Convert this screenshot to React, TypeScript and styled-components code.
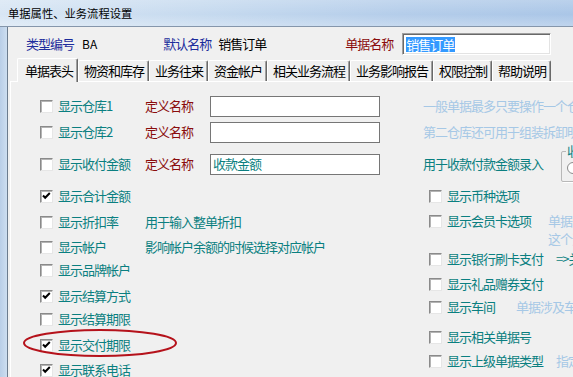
import React from 'react';
import styled, { createGlobalStyle } from 'styled-components';

const Global = createGlobalStyle`
  html, body { margin: 0; padding: 0; width: 573px; height: 377px; overflow: hidden; background: #f0f0f0; }
  body { font-family: "Noto Sans CJK SC", "Noto Sans", sans-serif; font-size: 13px; letter-spacing: -1px; }
  #root { width: 573px; height: 377px; }
`;

const C = {
  teal: '#0a7f80',
  maroon: '#8a0c0c',
  navy: '#1c2c9c',
  sky: '#a6c8e6',
  black: '#000',
};

const Window = styled.div`
  position: relative;
  width: 573px;
  height: 377px;
  overflow: hidden;
  display: flex;
  flex-direction: column;
  background: #f0f0f0;
`;

const TitleBar = styled.div`
  height: 26px;
  flex: none;
  display: flex;
  align-items: center;
  padding-left: 8px;
  background:
    linear-gradient(180deg, rgba(255, 255, 255, 0.2), rgba(255, 255, 255, 0) 55%, rgba(255, 255, 255, 0.25)),
    linear-gradient(90deg, #d8e6f4 0%, #c6daef 35%, #b4cdea 70%, #aac6e7 100%);
  border-bottom: 1px solid #8596ab;
  font-size: 11.3px;
  letter-spacing: 0;
  color: #000;
  white-space: nowrap;
`;

const Body = styled.div`
  flex: 1;
  display: flex;
  min-height: 0;
`;

const FrameEdge = styled.div`
  width: 7px;
  flex: none;
  background: linear-gradient(90deg, #b9cee7, #cddef0);
  border-right: 1px solid #6c7c8e;
`;

const Client = styled.div`
  flex: 1;
  min-width: 0;
  display: flex;
  flex-direction: column;
  padding-top: 6px;
`;

const HeaderRow = styled.div`
  height: 22px;
  flex: none;
  display: flex;
  align-items: center;
  padding-left: 18px;
  white-space: nowrap;
`;

const Text = styled.span<{ $color?: string; $ml?: number }>`
  flex: none;
  color: ${(p) => p.$color || '#000'};
  margin-left: ${(p) => p.$ml || 0}px;
  line-height: 16px;
  white-space: nowrap;
`;

const Latin = styled.span<{ $ml?: number }>`
  flex: none;
  margin-left: ${(p) => p.$ml || 0}px;
  font-size: 12px;
  letter-spacing: 0;
  line-height: 16px;
`;

const SunkenInput = styled.div<{ $ml?: number }>`
  flex: none;
  box-sizing: border-box;
  width: 149px;
  height: 22px;
  margin-left: ${(p) => p.$ml || 0}px;
  background: #fff;
  border: 1px solid;
  border-color: #a0a0a0 #fff #fff #a0a0a0;
  box-shadow: inset 1px 1px 0 #696969, inset -1px -1px 0 #e3e3e3;
  display: flex;
  align-items: center;
  padding-left: 3px;
`;

const Selected = styled.span`
  background: #3399ff;
  color: #fff;
  line-height: 15px;
  padding-right: 1px;
`;

const TabRow = styled.div`
  height: 23px;
  flex: none;
  margin-top: 3px;
  padding-left: 11px;
  display: flex;
  align-items: flex-end;
`;

const Tab = styled.div<{ $active?: boolean }>`
  box-sizing: border-box;
  height: ${(p) => (p.$active ? 24 : 21)}px;
  padding: 0 4px 0 ${(p) => (p.$active ? 7 : 5)}px;
  margin-left: ${(p) => (p.$active ? -2 : 0)}px;
  margin-bottom: ${(p) => (p.$active ? -1 : 0)}px;
  display: flex;
  align-items: center;
  border-top: 1px solid #fff;
  border-left: 1px solid #fff;
  border-right: 1px solid #696969;
  box-shadow: inset -1px 0 0 #a0a0a0;
  border-radius: 2px 2px 0 0;
  background: #f0f0f0;
  position: relative;
  z-index: ${(p) => (p.$active ? 2 : 1)};
  white-space: nowrap;
  line-height: 16px;
  color: #000;
`;

const Panel = styled.div`
  flex: 1;
  min-height: 0;
  margin-left: 2px;
  border-top: 1px solid #fff;
  border-left: 1px solid #fff;
  padding: 13px 0 0 29px;
  display: flex;
  flex-direction: column;
`;

const Row = styled.div<{ $mb?: number }>`
  height: 22px;
  flex: none;
  display: flex;
  align-items: center;
  margin-bottom: ${(p) => p.$mb || 0}px;
  white-space: nowrap;
`;

const Box = styled.span`
  box-sizing: border-box;
  width: 13px;
  height: 13px;
  flex: none;
  background: #fff;
  border: 1px solid;
  border-color: #8a8a8a #e6e6e6 #e6e6e6 #8a8a8a;
  box-shadow: inset 1px 1px 0 #b4b4b4;
  display: flex;
  align-items: center;
  justify-content: center;
`;

const Label = styled.span<{ $w?: number }>`
  flex: none;
  margin-left: 5px;
  width: ${(p) => (p.$w ? `${p.$w}px` : 'auto')};
  color: ${C.teal};
  line-height: 16px;
  white-space: nowrap;
`;

const DefLabel = styled.span`
  flex: none;
  width: 65px;
  color: ${C.maroon};
  line-height: 16px;
`;

const Field = styled.div`
  flex: none;
  box-sizing: border-box;
  width: 170px;
  height: 21px;
  background: #fff;
  border: 1px solid #767676;
  display: flex;
  align-items: center;
  padding-left: 2px;
  color: ${C.teal};
  line-height: 16px;
`;

const Hint = styled.span<{ $ml?: number; $color?: string }>`
  flex: none;
  margin-left: ${(p) => p.$ml || 0}px;
  color: ${(p) => p.$color || C.sky};
  line-height: 16px;
  white-space: nowrap;
`;

const MultiHint = styled.div<{ $ml?: number }>`
  flex: none;
  align-self: flex-start;
  margin-top: 2px;
  margin-left: ${(p) => p.$ml || 0}px;
  color: ${C.sky};
  line-height: 18px;
  white-space: nowrap;
`;

const GroupBox = styled.div`
  position: relative;
  flex: none;
  box-sizing: border-box;
  width: 60px;
  height: 31px;
  margin-left: 18px;
  margin-top: 4px;
  border: 1px solid #b8b8b8;
  border-radius: 2px;
  box-shadow: 1px 1px 0 #fff;
`;

const GroupLegend = styled.span`
  position: absolute;
  left: 4px;
  top: -9px;
  padding: 0 1px;
  background: #f0f0f0;
  color: ${C.teal};
  line-height: 16px;
`;

const Radio = styled.span`
  position: absolute;
  left: 5px;
  top: 10px;
  width: 12px;
  height: 12px;
  box-sizing: border-box;
  border-radius: 50%;
  border: 1px solid #8a8a8a;
  background: #fff;
`;

const Split = styled.div`
  display: flex;
  flex: none;
`;

const LeftCol = styled.div`
  width: 389px;
  flex: none;
  display: flex;
  flex-direction: column;
`;

const RightCol = styled.div`
  flex: none;
  display: flex;
  flex-direction: column;
`;

const Annotation = styled.svg`
  position: absolute;
  left: 22px;
  top: 328px;
  width: 160px;
  height: 32px;
  overflow: visible;
  pointer-events: none;
`;

const Check: React.FC<{ on?: boolean }> = ({ on }) => (
  <Box>
    {on && (
      <svg width="9" height="8" viewBox="0 0 9 8">
        <polyline points="1,3.5 3.2,5.8 7.8,1" fill="none" stroke="#000" strokeWidth="2" />
      </svg>
    )}
  </Box>
);

const tabs = ['单据表头', '物资和库存', '业务往来', '资金帐户', '相关业务流程', '业务影响报告', '权限控制', '帮助说明'];

export default function App() {
  return (
    <>
      <Global />
      <Window>
        <TitleBar>单据属性、业务流程设置</TitleBar>
        <Body>
          <FrameEdge />
          <Client>
            <HeaderRow>
              <Text $color={C.navy}>类型编号</Text>
              <Latin $ml={8}>BA</Latin>
              <Text $color={C.navy} $ml={66}>默认名称</Text>
              <Text $ml={7}>销售订单</Text>
              <Text $color={C.maroon} $ml={79}>单据名称</Text>
              <SunkenInput $ml={9}>
                <Selected>销售订单</Selected>
              </SunkenInput>
            </HeaderRow>
            <TabRow>
              {tabs.map((t, i) => (
                <Tab key={t} $active={i === 0}>
                  {t}
                </Tab>
              ))}
            </TabRow>
            <Panel>
              <Row $mb={4}>
                <Check />
                <Label $w={87}>显示仓库1</Label>
                <DefLabel>定义名称</DefLabel>
                <Field />
                <Hint $ml={43}>一般单据最多只要操作一个仓库</Hint>
              </Row>
              <Row $mb={10}>
                <Check />
                <Label $w={87}>显示仓库2</Label>
                <DefLabel>定义名称</DefLabel>
                <Field />
                <Hint $ml={43}>第二仓库还可用于组装拆卸明细</Hint>
              </Row>
              <Row $mb={10}>
                <Check />
                <Label $w={87}>显示收付金额</Label>
                <DefLabel>定义名称</DefLabel>
                <Field>收款金额</Field>
                <Hint $ml={43} $color={C.teal}>用于收款付款金额录入</Hint>
                <GroupBox>
                  <GroupLegend>收款</GroupLegend>
                  <Radio />
                </GroupBox>
              </Row>
              <Split>
                <LeftCol>
                  <Row $mb={4}>
                    <Check on />
                    <Label>显示合计金额</Label>
                  </Row>
                  <Row $mb={3}>
                    <Check />
                    <Label $w={87}>显示折扣率</Label>
                    <Hint $color={C.teal}>用于输入整单折扣</Hint>
                  </Row>
                  <Row $mb={1}>
                    <Check />
                    <Label $w={87}>显示帐户</Label>
                    <Hint $color={C.teal}>影响帐户余额的时候选择对应帐户</Hint>
                  </Row>
                  <Row $mb={4}>
                    <Check />
                    <Label>显示品牌帐户</Label>
                  </Row>
                  <Row $mb={1}>
                    <Check on />
                    <Label>显示结算方式</Label>
                  </Row>
                  <Row $mb={4}>
                    <Check />
                    <Label>显示结算期限</Label>
                  </Row>
                  <Row $mb={3}>
                    <Check on />
                    <Label>显示交付期限</Label>
                  </Row>
                  <Row>
                    <Check on />
                    <Label>显示联系电话</Label>
                  </Row>
                </LeftCol>
                <RightCol>
                  <Row $mb={3}>
                    <Check />
                    <Label>显示币种选项</Label>
                  </Row>
                  <Row $mb={16}>
                    <Check />
                    <Label>显示会员卡选项</Label>
                    <MultiHint $ml={17}>
                      单据中使用会员卡
                      <br />
                      这个选项有效
                    </MultiHint>
                  </Row>
                  <Row $mb={3}>
                    <Check />
                    <Label>显示银行刷卡支付</Label>
                    <Hint $ml={13} $color={C.teal}>=&gt;关联设置</Hint>
                  </Row>
                  <Row $mb={1}>
                    <Check />
                    <Label>显示礼品赠券支付</Label>
                  </Row>
                  <Row $mb={8}>
                    <Check />
                    <Label>显示车间</Label>
                    <Hint $ml={21}>单据涉及车间时</Hint>
                  </Row>
                  <Row $mb={2}>
                    <Check />
                    <Label>显示相关单据号</Label>
                  </Row>
                  <Row>
                    <Check />
                    <Label>显示上级单据类型</Label>
                    <Hint $ml={13}>指定上级单据</Hint>
                  </Row>
                </RightCol>
              </Split>
            </Panel>
          </Client>
        </Body>
        <Annotation viewBox="0 0 160 32">
          <ellipse cx="78" cy="15" rx="76" ry="13" fill="none" stroke="#b5121b" strokeWidth="2" />
        </Annotation>
      </Window>
    </>
  );
}
